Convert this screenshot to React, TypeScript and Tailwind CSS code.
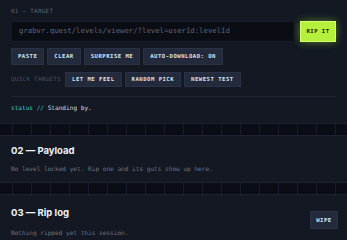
import React from "react";

const mono = "font-['DejaVu_Sans_Mono','Liberation_Mono',monospace]";

function Chip({ children }: { children: React.ReactNode }) {
  return (
    <button
      className={`${mono} h-full px-[6px] bg-[#232a3c] border border-[#2a3246] text-[#dde2ec] text-[5.6px] font-bold tracking-[0.5px] uppercase leading-none`}
    >
      {children}
    </button>
  );
}

export default function App() {
  return (
    <div className="w-[347px] h-[240px] overflow-hidden flex flex-col gap-[11px] bg-[#0a0d15] bg-[linear-gradient(to_right,#171d2a_1px,transparent_1px),linear-gradient(to_bottom,#151b27_1px,transparent_1px)] bg-[size:19px_19px] bg-[position:12px_4px]">
      {/* 01 — Target */}
      <section className="shrink-0 bg-[#131823] border-b border-[#1c2230] px-[11px] pt-[8px] pb-[11px]">
        <div className={`${mono} h-[7px] leading-[7px] text-[5.9px] tracking-[0.3px] text-[#5c6577]`}>
          01 — TARGET
        </div>
        <div className="mt-[6px] flex gap-[5px] h-[21px]">
          <div className="flex-1 flex items-center px-[7px] bg-[#0a0d14] border border-[#161b27]">
            <span className={`${mono} text-[7.3px] text-[#5e6679] whitespace-nowrap`}>
              grabvr.quest/levels/viewer/?level=userId:levelId
            </span>
          </div>
          <button
            className={`${mono} w-[36px] bg-[#b4f03c] border border-[#d2ff6a] text-[#1a2110] text-[5.6px] font-bold tracking-[0.5px] shadow-[0_0_9px_rgba(170,235,60,0.45)]`}
          >
            RIP IT
          </button>
        </div>
        <div className="mt-[6px] flex gap-[3px] h-[17px]">
          <Chip>Paste</Chip>
          <Chip>Clear</Chip>
          <Chip>Surprise me</Chip>
          <Chip>Auto-download: on</Chip>
        </div>
        <div className="mt-[7px] flex items-center gap-[3px] h-[15px]">
          <span className={`${mono} mr-[1px] text-[5.9px] tracking-[0.3px] text-[#4a5264] uppercase`}>
            Quick targets
          </span>
          <Chip>Let me feel</Chip>
          <Chip>Random pick</Chip>
          <Chip>Newest test</Chip>
        </div>
        <div className="mt-[9px] h-px bg-[#1e2432]" />
        <div className={`${mono} mt-[7px] h-[8px] leading-[8px] text-[6.1px] text-[#d5dae3]`}>
          <span className="text-[#3fc6b8]">status //</span> Standing by.
        </div>
      </section>

      {/* 02 — Payload */}
      <section className="shrink-0 bg-[#131823] border-y border-[#1c2230] px-[11px] pt-[9px] pb-[9px]">
        <h2 className="h-[12px] leading-[12px] font-['Inter',sans-serif] font-bold text-[9.5px] text-[#f1f3f7]">
          02 — Payload
        </h2>
        <p className={`${mono} mt-[8px] h-[8px] leading-[8px] text-[6.1px] text-[#6b7385]`}>
          No level locked yet. Rip one and its guts show up here.
        </p>
      </section>

      {/* 03 — Rip log */}
      <section className="flex-1 bg-[#131823] border-t border-[#1c2230] pr-[9px] pl-[11px] pt-[9px]">
        <div className="flex items-center justify-between h-[18px]">
          <h2 className="font-['Inter',sans-serif] font-bold text-[9.5px] text-[#f1f3f7]">
            03 — Rip log
          </h2>
          <div className="h-[18px] w-[28px]">
            <button
              className={`${mono} w-full h-full bg-[#232a3c] border border-[#2a3246] text-[#dde2ec] text-[5.6px] font-bold tracking-[0.5px]`}
            >
              WIPE
            </button>
          </div>
        </div>
        <p className={`${mono} mt-[7px] h-[8px] leading-[8px] text-[6.1px] text-[#6b7385]`}>
          Nothing ripped yet this session.
        </p>
      </section>
    </div>
  );
}
